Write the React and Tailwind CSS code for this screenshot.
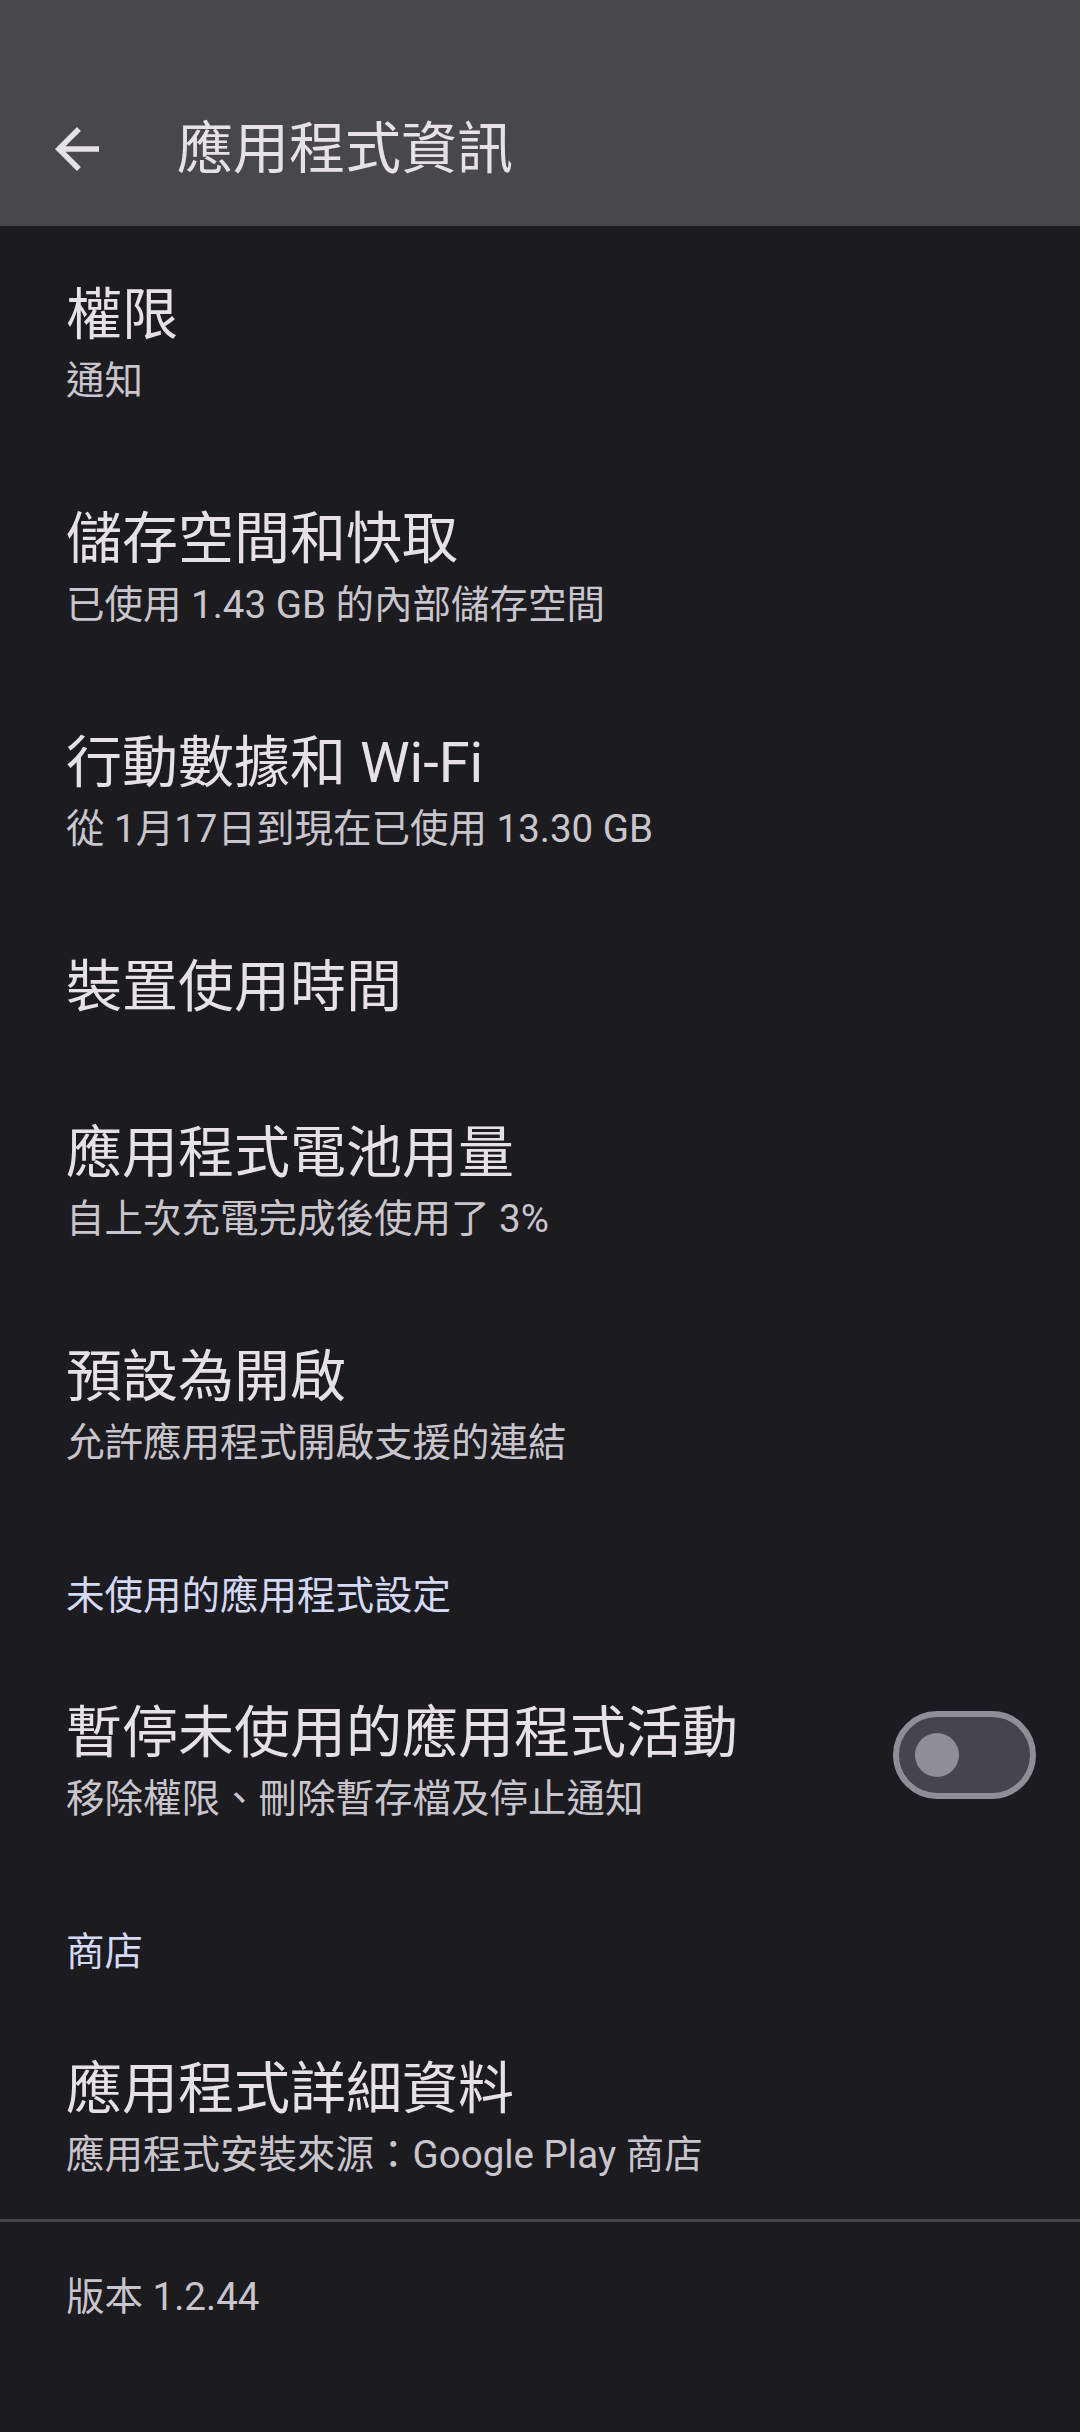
const font = { fontFamily: 'Roboto, "Noto Sans CJK TC", sans-serif' };

const items1 = [
  { title: '權限', sub: '通知' },
  { title: '儲存空間和快取', sub: '已使用 1.43 GB 的內部儲存空間' },
  { title: '行動數據和 Wi-Fi', sub: '從 1月17日到現在已使用 13.30 GB' },
  { title: '裝置使用時間' },
  { title: '應用程式電池用量', sub: '自上次充電完成後使用了 3%' },
  { title: '預設為開啟', sub: '允許應用程式開啟支援的連結' },
];

function Item({ title, sub, right, last }) {
  return (
    <div className={`flex items-center pl-[66px] pr-[44px] pt-[46px] ${last ? 'pb-[35px]' : 'pb-[46px]'}`}>
      <div className="flex-1 min-w-0">
        <div className="text-[56px] leading-[74px] text-[#e6e1e6]">{title}</div>
        {sub && <div className="text-[38.5px] leading-[58px] text-[#c9c5cc]">{sub}</div>}
      </div>
      {right}
    </div>
  );
}

function SectionHeader({ children }) {
  return (
    <div className="pl-[66px] pt-[53px] pb-[29px] text-[38.5px] leading-[50px] text-[#d4d9f6]">
      {children}
    </div>
  );
}

function Toggle() {
  return (
    <div className="w-[143px] h-[88px] mb-[14px] rounded-full border-[6px] border-[#8f8e97] bg-[#46454d] flex items-center pl-[16px] shrink-0">
      <div className="w-[44px] h-[44px] rounded-full bg-[#8f8e97]" />
    </div>
  );
}

export default function App() {
  return (
    <div className="w-[1080px] h-[2432px] bg-[#1c1b20] overflow-hidden" style={font}>
      {/* top bar */}
      <div className="h-[226px] bg-[#48474c] pt-[83px]">
        <div className="h-[132px] flex items-center pl-[44px]">
          <svg width="66" height="66" viewBox="0 0 24 24" fill="#e6e1e6">
            <path d="M20 11H7.83l5.59-5.59L12 4l-8 8 8 8 1.41-1.41L7.83 13H20v-2z" />
          </svg>
          <span className="ml-[67px] text-[56px] text-[#e6e1e6]">應用程式資訊</span>
        </div>
      </div>

      <div className="pt-[6px]">
        {items1.map((it) => (
          <Item key={it.title} title={it.title} sub={it.sub} />
        ))}
        <SectionHeader>未使用的應用程式設定</SectionHeader>
        <Item title="暫停未使用的應用程式活動" sub="移除權限、刪除暫存檔及停止通知" right={<Toggle />} />
        <SectionHeader>商店</SectionHeader>
        <Item title="應用程式詳細資料" sub="應用程式安裝來源：Google Play 商店" last />
        <div className="h-[3px] bg-[#46454a]" />
        <div className="pl-[66px] pt-[46px] text-[38.5px] leading-[58px] text-[#c9c5cc]">版本 1.2.44</div>
      </div>
    </div>
  );
}
